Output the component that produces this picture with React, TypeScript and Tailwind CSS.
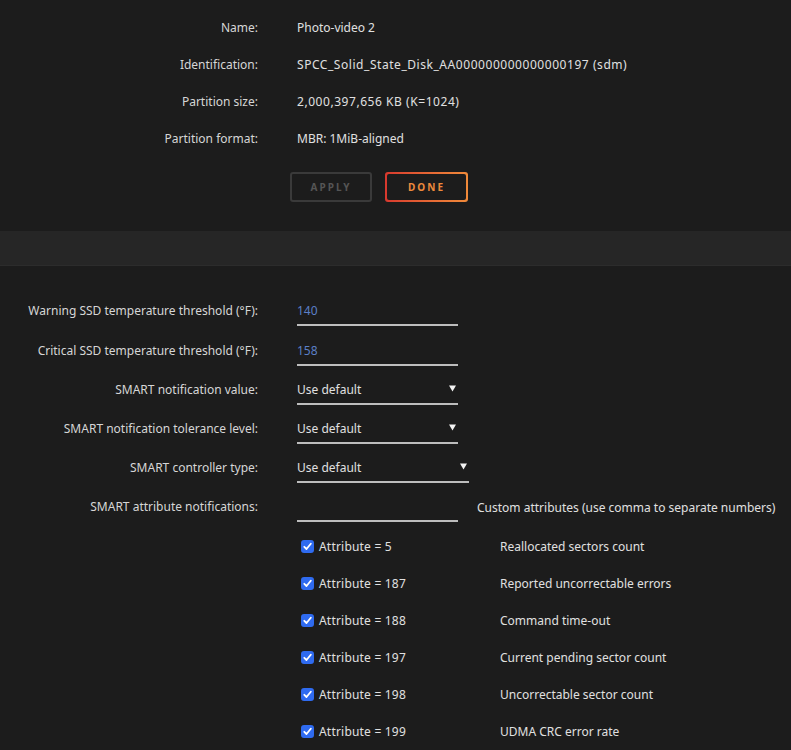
import React from 'react';

const infoRows = [
  { label: 'Name:', value: 'Photo-video 2', wide: false },
  { label: 'Identification:', value: 'SPCC_Solid_State_Disk_AA000000000000000197 (sdm)', wide: true },
  { label: 'Partition size:', value: '2,000,397,656 KB (K=1024)', wide: true },
  { label: 'Partition format:', value: 'MBR: 1MiB-aligned', wide: false },
];

const attributes = [
  { id: 5, desc: 'Reallocated sectors count' },
  { id: 187, desc: 'Reported uncorrectable errors' },
  { id: 188, desc: 'Command time-out' },
  { id: 197, desc: 'Current pending sector count' },
  { id: 198, desc: 'Uncorrectable sector count' },
  { id: 199, desc: 'UDMA CRC error rate' },
];

function Label({ children }: { children: React.ReactNode }) {
  return <div className="w-[258px] shrink-0 pt-[11px] text-right leading-[18px] text-[#d6d6d6]">{children}</div>;
}

function Caret() {
  return (
    <svg width="7" height="7" viewBox="0 0 7 7">
      <path d="M0 0.5 H7 L3.5 6.5 Z" fill="#f2f2f2" />
    </svg>
  );
}

function Field({ children, wide }: { children?: React.ReactNode; wide?: boolean }) {
  return (
    <div
      className={`ml-[39px] flex h-[35px] items-start justify-between border-b-2 border-[#bdbdbd] pr-[2px] pt-[11px] leading-[18px] ${
        wide ? 'w-[172px]' : 'w-[161px]'
      }`}
    >
      {children}
    </div>
  );
}

function Check() {
  return (
    <span className="flex h-[13px] w-[13px] shrink-0 items-center justify-center rounded-[3px] bg-[#2f6bf0]">
      <svg width="9" height="9" viewBox="0 0 9 9">
        <path d="M1.3 4.8 L3.5 7 L7.8 1.8" fill="none" stroke="#fff" strokeWidth="1.8" strokeLinecap="round" strokeLinejoin="round" />
      </svg>
    </span>
  );
}

export default function App() {
  return (
    <div
      className="min-h-screen w-[791px] bg-[#1c1c1c] text-[12px] text-[#dcdcdc]"
      style={{ fontFamily: '"Noto Sans", "Open Sans", sans-serif' }}
    >
      <section className="pt-[19px]">
        {infoRows.map((r) => (
          <div key={r.label} className="flex h-[37px] items-start leading-[18px]">
            <div className="w-[258px] shrink-0 text-right text-[#d6d6d6]">{r.label}</div>
            <div className={`ml-[39px] text-[#e0e0e0] ${r.wide ? 'tracking-[0.55px]' : ''}`}>{r.value}</div>
          </div>
        ))}
        <div className="ml-[290px] mt-[5px] flex gap-[13px]">
          <button className="h-[30px] w-[82px] rounded-[3px] border-2 border-[#3a3a3a] text-[10px] font-bold tracking-[0.2em] text-[#555555]">
            APPLY
          </button>
          <button className="h-[30px] w-[83px] rounded-[3px] bg-gradient-to-r from-[#d8382e] to-[#f08a3a] p-[2px]">
            <span className="flex h-full w-full items-center justify-center rounded-[2px] bg-[#1c1c1c] text-[10px] font-bold tracking-[0.2em] text-[#ee8a3c]">
              DONE
            </span>
          </button>
        </div>
      </section>

      <div className="mt-[29px] h-[35px] border-b border-[#2c2c2c] bg-[#262626]" />

      <section className="pt-[25px]">
        <div className="flex h-[40px] items-start">
          <Label>Warning SSD temperature threshold (°F):</Label>
          <Field>
            <span className="text-[#5b7fc7]">140</span>
          </Field>
        </div>
        <div className="flex h-[39px] items-start">
          <Label>Critical SSD temperature threshold (°F):</Label>
          <Field>
            <span className="text-[#5b7fc7]">158</span>
          </Field>
        </div>
        <div className="flex h-[39px] items-start">
          <Label>SMART notification value:</Label>
          <Field>
            <span className="text-[#e0e0e0]">Use default</span>
            <span className="pt-[4px]">
              <Caret />
            </span>
          </Field>
        </div>
        <div className="flex h-[39px] items-start">
          <Label>SMART notification tolerance level:</Label>
          <Field>
            <span className="text-[#e0e0e0]">Use default</span>
            <span className="pt-[4px]">
              <Caret />
            </span>
          </Field>
        </div>
        <div className="flex h-[39px] items-start">
          <Label>SMART controller type:</Label>
          <Field wide>
            <span className="text-[#e0e0e0]">Use default</span>
            <span className="pt-[4px]">
              <Caret />
            </span>
          </Field>
        </div>
        <div className="flex h-[39px] items-start">
          <Label>SMART attribute notifications:</Label>
          <Field />
          <div className="ml-[19px] pt-[12px] leading-[18px] text-[#e0e0e0]">
            Custom attributes (use comma to separate numbers)
          </div>
        </div>

        <div className="mt-[2px] pb-[10px]">
          {attributes.map((a) => (
            <div key={a.id} className="flex h-[37px] items-center pl-[301px]">
              <Check />
              <span className="ml-[5px] w-[181px] tracking-[0.2px] text-[#e0e0e0]">Attribute = {a.id}</span>
              <span className="text-[#e0e0e0]">{a.desc}</span>
            </div>
          ))}
        </div>
      </section>
    </div>
  );
}
